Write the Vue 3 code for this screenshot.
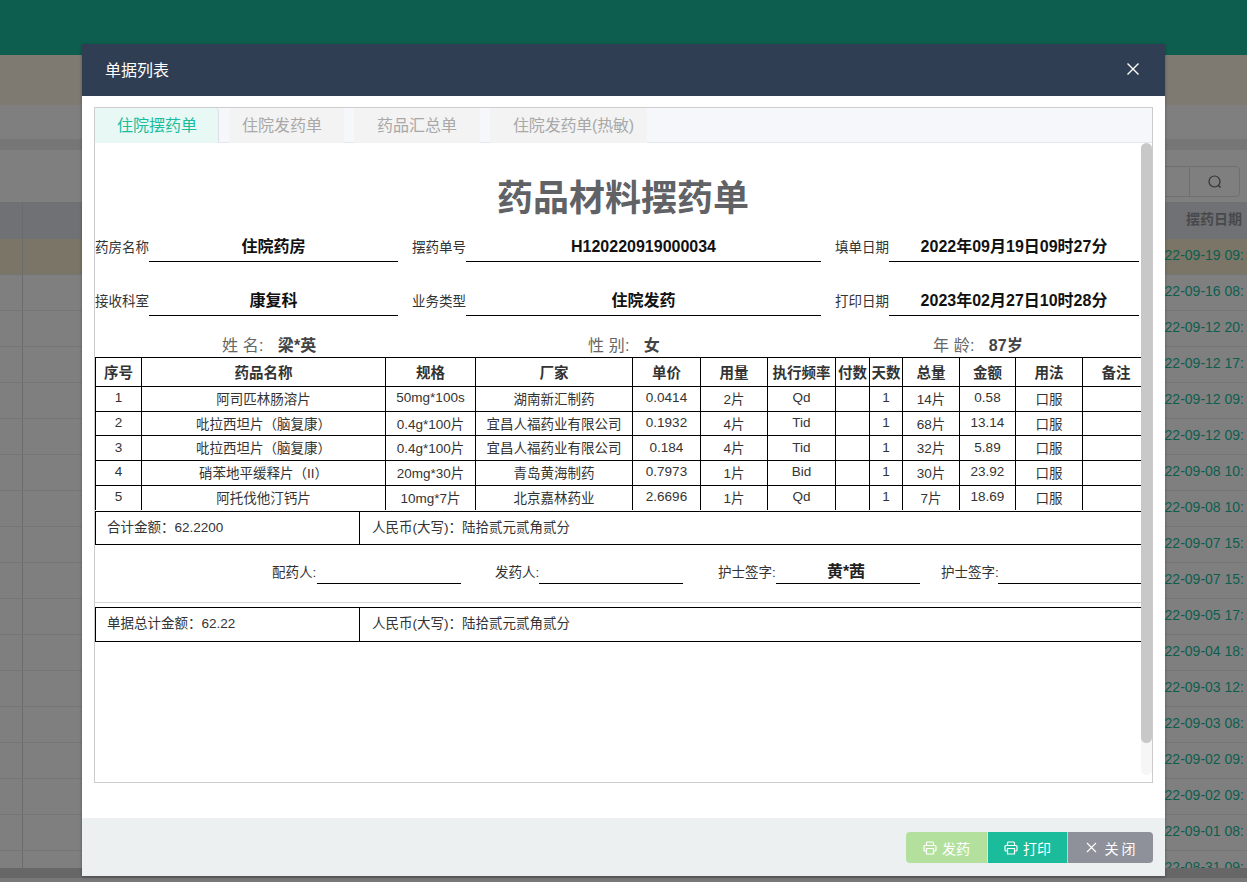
<script setup>
const dates = ['2022-09-19 09:','2022-09-16 08:','2022-09-12 20:','2022-09-12 17:','2022-09-12 09:','2022-09-12 09:','2022-09-08 10:','2022-09-08 10:','2022-09-07 15:','2022-09-07 15:','2022-09-05 17:','2022-09-04 18:','2022-09-03 12:','2022-09-03 08:','2022-09-02 09:','2022-09-02 09:','2022-09-01 08:','2022-08-31 09:']
const cols = [46,244,90,157,68,67,68,34,33,57,56,67,67]
const heads = ['序号','药品名称','规格','厂家','单价','用量','执行频率','付数','天数','总量','金额','用法','备注']
const rows = [
  ['1','阿司匹林肠溶片','50mg*100s','湖南新汇制药','0.0414','2片','Qd','','1','14片','0.58','口服',''],
  ['2','吡拉西坦片（脑复康）','0.4g*100片','宜昌人福药业有限公司','0.1932','4片','Tid','','1','68片','13.14','口服',''],
  ['3','吡拉西坦片（脑复康）','0.4g*100片','宜昌人福药业有限公司','0.184','4片','Tid','','1','32片','5.89','口服',''],
  ['4','硝苯地平缓释片（II）','20mg*30片','青岛黄海制药','0.7973','1片','Bid','','1','30片','23.92','口服',''],
  ['5','阿托伐他汀钙片','10mg*7片','北京嘉林药业','2.6696','1片','Qd','','1','7片','18.69','口服','']
]
const tabs = ['住院摆药单','住院发药单','药品汇总单','住院发药单(热敏)']
</script>

<template>
  <div class="page">
    <div class="topbar"></div>
    <div class="band"></div>
    <div class="subnav"></div>
    <div class="gap"></div>
    <div class="toolbar">
      <div class="search"><span class="search-input"></span><span class="search-btn">
        <svg width="16" height="16" viewBox="0 0 16 16" fill="none" stroke="#606266" stroke-width="1.2"><circle cx="7.5" cy="7.5" r="5.5"/><path d="M11.5 11.5l2 2"/></svg>
      </span></div>
    </div>
    <div class="thead"><span class="first-cell"></span><span class="th-left"></span><span class="th-date">摆药日期</span></div>
    <div class="rows">
      <div v-for="(d, i) in dates" :key="i" class="row" :class="{ sel: i === 0 }">
        <span class="first-cell"></span><span class="row-left"></span><span class="row-date">{{ d }}</span>
      </div>
    </div>
    <div class="hscroll"></div>
    <div class="pagefoot"></div>
    <div class="overlay"></div>

    <section class="modal">
      <header class="m-head">
        <span class="m-title">单据列表</span>
        <svg class="m-close" width="14" height="14" viewBox="0 0 14 14" stroke="#fff" stroke-width="1.4"><path d="M1.5 1.5l11 11M12.5 1.5l-11 11"/></svg>
      </header>
      <div class="m-body">
        <div class="tabs">
          <div class="tabbar">
            <div v-for="(t, i) in tabs" :key="t" class="tab" :class="{ active: i === 0 }">{{ t }}</div>
          </div>
          <div class="content">
            <div class="doc">
              <h1 class="title">药品材料摆药单</h1>
              <div class="info">
                <div class="f f1"><label>药房名称</label><b>住院药房</b></div>
                <div class="f f2"><label>摆药单号</label><b>H120220919000034</b></div>
                <div class="f f3"><label>填单日期</label><b>2022年09月19日09时27分</b></div>
              </div>
              <div class="info second">
                <div class="f f1"><label>接收科室</label><b>康复科</b></div>
                <div class="f f2"><label>业务类型</label><b>住院发药</b></div>
                <div class="f f3"><label>打印日期</label><b>2023年02月27日10时28分</b></div>
              </div>
              <div class="patient">
                <span class="p p1">姓 名:<b>梁*英</b></span>
                <span class="p p2">性 别:<b>女</b></span>
                <span class="p p3">年 龄:<b>87岁</b></span>
              </div>
              <table class="drug">
                <colgroup><col v-for="(c, i) in cols" :key="i" :style="{ width: c + 'px' }" /></colgroup>
                <thead><tr><th v-for="h in heads" :key="h">{{ h }}</th></tr></thead>
                <tbody>
                  <tr v-for="(r, i) in rows" :key="i"><td v-for="(c, j) in r" :key="j">{{ c }}</td></tr>
                </tbody>
              </table>
              <div class="sum first"><div class="s-l">合计金额：62.2200</div><div class="s-r">人民币(大写)：陆拾贰元贰角贰分</div></div>
              <div class="sign">
                <label class="l1">配药人:</label><span class="line"></span>
                <label class="l2">发药人:</label><span class="line"></span>
                <label class="l3">护士签字:</label><span class="line"><b>黄*茜</b></span>
                <label class="l4">护士签字:</label><span class="line last"></span>
              </div>
              <div class="sum total"><div class="s-l">单据总计金额：62.22</div><div class="s-r">人民币(大写)：陆拾贰元贰角贰分</div></div>
            </div>
            <div class="scroll"><div class="thumb"></div></div>
          </div>
        </div>
      </div>
      <footer class="m-foot">
        <button class="btn b1">
          <svg width="14" height="14" viewBox="0 0 14 14" fill="none" stroke="currentColor" stroke-width="1.2"><path d="M3.5 4.5V2a1 1 0 0 1 1-1h5a1 1 0 0 1 1 1v2.5M3.5 10H2a1 1 0 0 1-1-1V5.5a1 1 0 0 1 1-1h10a1 1 0 0 1 1 1V9a1 1 0 0 1-1 1h-1.5"/><path d="M3.5 7.5h7V13h-7z"/></svg>
          <span>发药</span>
        </button>
        <button class="btn b2">
          <svg width="14" height="14" viewBox="0 0 14 14" fill="none" stroke="currentColor" stroke-width="1.2"><path d="M3.5 4.5V2a1 1 0 0 1 1-1h5a1 1 0 0 1 1 1v2.5M3.5 10H2a1 1 0 0 1-1-1V5.5a1 1 0 0 1 1-1h10a1 1 0 0 1 1 1V9a1 1 0 0 1-1 1h-1.5"/><path d="M3.5 7.5h7V13h-7z"/></svg>
          <span>打印</span>
        </button>
        <button class="btn b3">
          <svg class="x" width="11" height="11" viewBox="0 0 11 11" stroke="currentColor" stroke-width="1.1"><path d="M1 1l9 9M10 1l-9 9"/></svg>
          <span class="wide">关闭</span>
        </button>
      </footer>
    </section>
  </div>
</template>

<style>
html, body { margin: 0; overflow: hidden; }
</style>

<style scoped>
* { box-sizing: border-box; }
.page { position: relative; width: 1247px; height: 882px; overflow: hidden; background: #fff;
  font-family: "Liberation Sans", "Noto Sans CJK SC", sans-serif; color: #333; }
.topbar { height: 55px; background: #1abc9c; }
.band { height: 50px; background: #fdf4e2; }
.subnav { height: 34px; background: #fff; }
.gap { height: 11px; background: #ecedef; }
.toolbar { height: 52px; background: #fff; display: flex; justify-content: flex-end; align-items: flex-end; padding: 0 7px 5px 0; }
.search { display: flex; width: 120px; height: 31px; border: 1px solid #dcdfe6; border-radius: 4px; }
.search-input { flex: 1; border-right: 1px solid #dcdfe6; }
.search-btn { width: 49px; display: flex; align-items: center; justify-content: center; }
.thead { height: 37px; background: #e0e2e8; display: flex; align-items: center; }
.first-cell { width: 23px; height: 100%; border-right: 1px solid #d5d6da; flex: none; }
.th-left { width: 1163px; flex: none; }
.th-date { font-size: 14px; font-weight: 700; color: #909399; white-space: nowrap; padding-bottom: 5px; }
.rows { height: 629px; overflow: hidden; }
.row { height: 36px; display: flex; align-items: center; border-bottom: 1px solid #ebebeb; background: #fff; }
.row.sel { background: #f5ebcd; }
.row-left { width: 1126px; height: 100%; flex: none; }
.row-date { font-size: 14px; color: #1abc9c; white-space: nowrap; padding-bottom: 4px; }
.hscroll { height: 10px; background: #cfcfcf; }
.pagefoot { height: 4px; background: #f0f0f0; }
.overlay { position: absolute; inset: 0; background: rgba(0,0,0,.5); }
.modal { position: absolute; left: 82px; top: 44px; width: 1083px; height: 832px; background: #fff;
  display: flex; flex-direction: column; box-shadow: 0 1px 3px rgba(0,0,0,.3); }
.m-head { height: 52px; background: #2f3e52; color: #fff; font-size: 16px; display: flex; align-items: center; justify-content: space-between; padding: 0 25px 0 23px; }
.m-title { padding-bottom: 3px; }
.m-close { margin-bottom: 2px; }
.m-body { flex: 1; padding: 11px 12px 35px; min-height: 0; }
.tabs { height: 676px; border: 1px solid #ccc; display: flex; flex-direction: column; }
.tabbar { height: 35px; background: #f5f7fa; display: flex; gap: 10px; border-bottom: 1px solid #e4e7ed; }
.tab { height: 35px; line-height: 35px; font-size: 16px; color: #a8a8a8; background: #f3f3f3; text-align: center; padding: 0 23px; border-radius: 4px 4px 0 0; white-space: nowrap; flex: none; }
.tab:nth-child(2) { padding: 0 22px 0 13px; }
.tab:last-child { padding-right: 13px; letter-spacing: -.2px; }
.tab.active { color: #1abc9c; background: #e8f8f5; border-right: 1px solid #dcdfe6; padding: 0 21px 0 22px; }
.content { flex: 1; display: flex; min-height: 0; }
.doc { width: 1046px; overflow: hidden; flex: none; }
.title { margin: 0; height: 83px; padding: 32px 0 0 10px; line-height: 48px; font-size: 36px; font-weight: 700; text-align: center; color: #606266; }
.info { display: flex; height: 36px; align-items: flex-end; }
.info.second { margin-top: 18px; }
.f { display: flex; align-items: stretch; height: 36px; }
.f label { font-size: 13.5px; color: #333; align-self: flex-end; line-height: 29px; white-space: nowrap; width: 54px; }
.f b { flex: 1; border-bottom: 1px solid #000; text-align: center; font-size: 16px; color: #111; line-height: 41px; white-space: nowrap; }
.f1 { width: 303px; margin-right: 14px; }
.f2 { width: 409px; margin-right: 15px; }
.f3 { width: 304px; margin-left: -1px; }
.patient { height: 41px; color: #666; font-size: 16px; display: flex; align-items: center; padding-top: 14px; letter-spacing: .2px; }
.p { white-space: nowrap; display: inline-flex; }
.p b { margin-left: 14px; color: #444; font-size: 16px; }
.p1 { margin-left: 127px; width: 366px; }
.p2 { width: 345px; }
.drug { border-collapse: collapse; table-layout: fixed; width: 1054px; }
.drug th, .drug td { border: 1px solid #000; text-align: center; padding: 0 0 2px; white-space: nowrap; overflow: hidden; }
.drug th { height: 29px; font-size: 14.5px; font-weight: 700; color: #333; }
.drug td { height: 24.7px; font-size: 13.5px; color: #333; }
.drug tr:last-child td { border-bottom: 0; }
.sum { display: flex; height: 34px; width: 1054px; border: 1px solid #000; font-size: 13.5px; color: #333; line-height: 32px; }
.sum.first { margin-top: 1px; }
.s-l { width: 264px; border-right: 1px solid #000; padding-left: 11px; }
.s-r { flex: 1; padding-left: 12px; }
.sign { height: 58px; display: flex; align-items: flex-end; padding: 0 0 18px 177px; font-size: 13.5px; border-bottom: 1px solid #d5d5d5; }
.sign label { white-space: nowrap; line-height: 22px; flex: none; }
.l1 { width: 45px; }
.l2 { width: 44px; margin-left: 34px; }
.l3 { width: 58px; margin-left: 35px; }
.l4 { width: 57px; margin-left: 21px; }
.line { display: block; width: 144px; height: 25px; border-bottom: 1px solid #000; text-align: center; font-size: 16px; line-height: 26px; color: #222; flex: none; padding-right: 4px; }
.line.last { width: 150px; }
.sum.total { margin-top: 4px; height: 35px; }
.scroll { width: 11px; background: #f6f6f6; border-radius: 6px; margin-bottom: 7px; flex: none; }
.thumb { height: 600px; background: #c8c8c8; border-radius: 6px; }
.m-foot { height: 58px; background: #ecf0f1; display: flex; justify-content: flex-end; align-items: flex-start; padding: 14px 12px 0 0; }
.btn { height: 31px; border: 0; color: #fff; font: 14px "Liberation Sans", "Noto Sans CJK SC", sans-serif; display: flex; align-items: center; justify-content: center; gap: 5px; padding: 0; }
.b1 { width: 82px; background: #b3e19d; border-radius: 4px 0 0 4px; border-right: 1px solid #d6efc9; }
.b2 { width: 80px; background: #1abc9c; border-right: 1px solid #a8dfd2; }
.b3 { width: 85px; background: #8e9199; border-radius: 0 4px 4px 0; gap: 8px; }
.wide { letter-spacing: 3px; margin-right: -3px; }
</style>
